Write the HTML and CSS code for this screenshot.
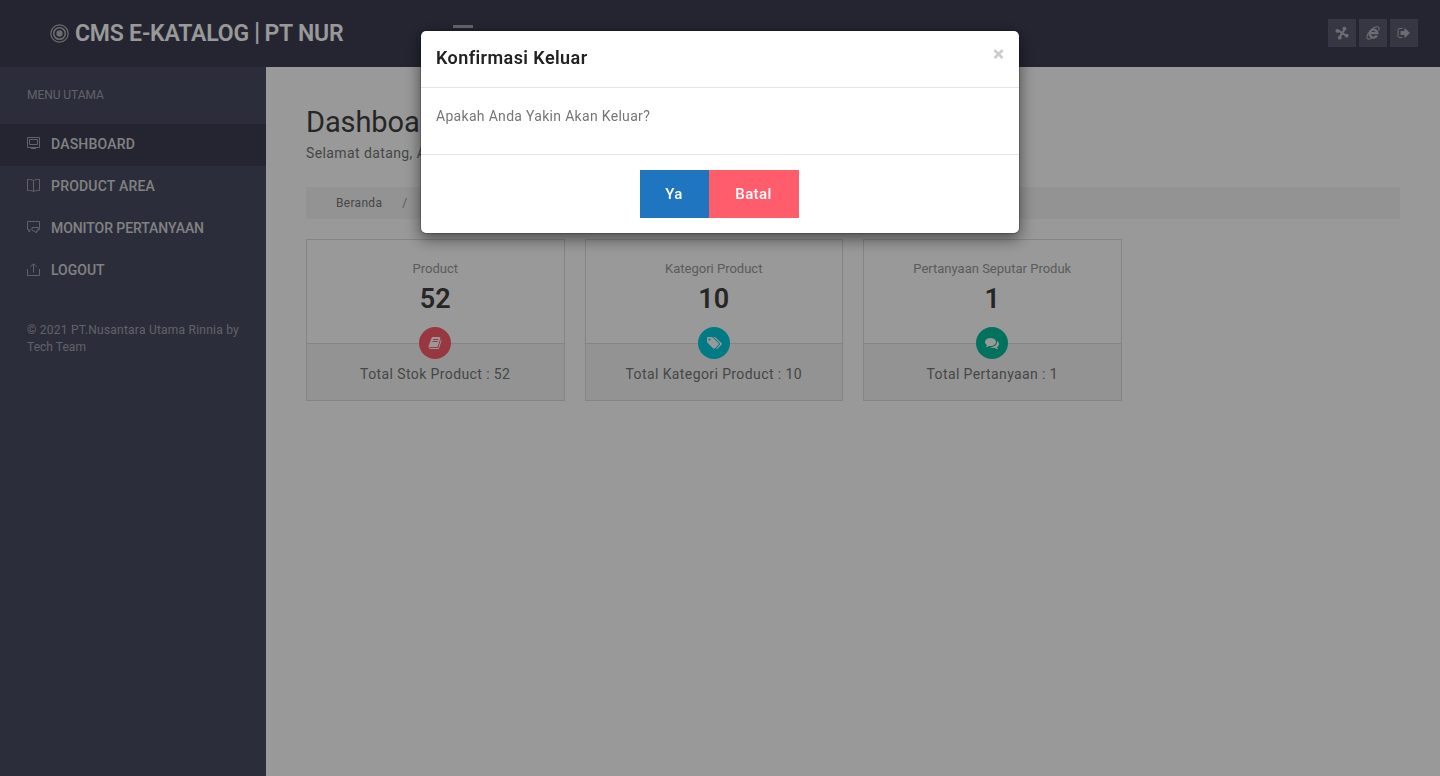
FILE: index.html
```html
<!DOCTYPE html>
<html lang="id">
<head>
<meta charset="utf-8">
<title>CMS E-Katalog</title>
<link rel="stylesheet" href="styles.css">
</head>
<body>
<header class="topbar">
  <div class="brand">
    <svg class="brand-icon" viewBox="0 0 20 20" fill="none" stroke="currentColor"><circle cx="10" cy="10" r="9.1" stroke-width="1.3"/><circle cx="10" cy="10" r="6.1" stroke-width="1.6"/><circle cx="10" cy="10" r="3.3" fill="currentColor" stroke="none"/></svg>
    <span class="brand-text">CMS E-KATALOG<span class="pipe"> | </span>PT NUR</span>
  </div>
  <div class="toggle"></div>
  <div class="tools">
    <span class="tool"><svg viewBox="0 0 16 16" fill="currentColor" stroke="currentColor"><path d="M3 5.600C6 5.500 7.500 8 13 11.200M10.800 3.500C10 7 7 8.500 5.400 13" stroke-width="2.400" fill="none"/><g stroke="none"><circle cx="2.800" cy="5.600" r="2.200"/><circle cx="10.800" cy="3" r="2.200"/><circle cx="13.300" cy="11" r="2.200"/><circle cx="5.400" cy="13.300" r="2.200"/></g></svg></span>
    <span class="tool"><svg viewBox="0 0 16 16" fill="none" stroke="currentColor"><path d="M4.400 8.200H13A4.500 4.500 0 1 0 12.500 10.800" stroke-width="2.700"/><path d="M6 4.200C9 1.300 13.500-.3 14.700 1.600c.5.900.2 2.300-.4 3.600M3 7.500C.8 11 .4 14.300 2.200 14.900 3.700 15.200 5.600 14.400 7 13.300" stroke-width="1.200"/></svg></span>
    <span class="tool"><svg class="exit" viewBox="0 0 1792 1792" fill="currentColor"><path d="M704 1440q0 4 1 20t.5 26.500-3 23.500-10 19.500-20.500 6.500h-320q-119 0-203.500-84.500t-84.500-203.500v-704q0-119 84.500-203.500t203.500-84.500h320q13 0 22.500 9.500t9.500 22.500q0 4 1 20t.5 26.500-3 23.500-10 19.500-20.500 6.500h-320q-66 0-113 47t-47 113v704q0 66 47 113t113 47h312l11.500 1 11.500 3 8 5.500 7 9 2 13.500zm928-544q0 26-19 45l-544 544q-19 19-45 19t-45-19-19-45v-288h-448q-26 0-45-19t-19-45v-384q0-26 19-45t45-19h448v-288q0-26 19-45t45-19 45 19l544 544q19 19 19 45z"/></svg></span>
  </div>
</header>
<div class="layout">
  <nav class="sidebar">
    <div class="menu-title">MENU UTAMA</div>
    <a class="item active"><svg viewBox="0 0 13 13" fill="none" stroke="currentColor"><path d="M.5 .5h12v10H.5zM2.500 2.500h8v5h-8zM4 11.500h5"/></svg><span class="wide-text">DASHBOARD</span></a>
    <a class="item"><svg viewBox="0 0 13 13" fill="none" stroke="currentColor"><path d="M6.500 1.500C5 .5 3 .5.5.5v11c2.500 0 4.500 0 6 1 1.500-1 3.500-1 6-1V.5c-2.500 0-4.500 0-6 1zM6.500 1.500v11"/></svg><span class="wide-text">PRODUCT AREA</span></a>
    <a class="item"><svg viewBox="0 0 13 13" fill="none" stroke="currentColor"><path d="M3.500 8.500 2 11V8.500H.5v-8h12v8H11M5 6.500h6v3.500H9.500v2L7.500 10H6L5 8.500z"/></svg><span class="tight-text">MONITOR PERTANYAAN</span></a>
    <a class="item"><svg viewBox="0 0 13 13" fill="none" stroke="currentColor"><path d="M.5 6v6.500h12V6M6.500 9.500V.8M3.500 3.800l3-3 3 3"/></svg><span>LOGOUT</span></a>
    <p class="copy">© 2021 PT.Nusantara Utama Rinnia by<br><span class="team">Tech Team</span></p>
  </nav>
  <main class="content">
    <h1 class="title">Dashboard</h1>
    <p class="welcome">Selamat datang, Admin</p>
    <div class="crumbs"><span>Beranda</span><span class="sep">/</span><span>Dashboard</span></div>
    <div class="cards">
      <section class="card">
        <div class="card-main"><div class="label">Product</div><div class="value">52</div></div>
        <div class="card-foot"><span class="badge red"><svg viewBox="0 0 1792 1792" fill="currentColor"><path d="M1703 478q40 57 18 129l-275 906q-19 64-76.500 107.500t-122.500 43.500h-923q-77 0-148.500-53.500t-99.500-131.500q-24-67-2-127 0-4 3-27t4-37q1-8-3-21.500t-3-19.500q2-11 8-21t16.500-23.500 16.500-23.500q23-38 45-91.500t30-91.500q3-10 .5-30t-.5-28q3-11 17-28t17-23q21-36 42-92t25-90q1-9-2.500-32t.5-28q4-13 22-30.500t22-22.500q19-26 42.500-84.500t27.500-96.500q1-8-3-25.500t-2-26.500q2-8 9-18t18-23 17-21q8-12 16.500-30.500t15-35 16-36 19.500-32 26.500-23.500 36-11.500 47.500 5.500l-1 3q38-9 51-9h761q74 0 114 56t18 130l-274 906q-36 119-71.500 153.500t-128.500 34.500h-869q-27 0-38 15-11 16-1 43 24 70 144 70h923q29 0 56-15.500t35-41.500l300-987q7-22 5-57 38 15 59 43zm-1064 2q-4 13 2 22.500t20 9.500h608q13 0 25.500-9.500t16.500-22.500l21-64q4-13-2-22.500t-20-9.500h-608q-13 0-25.500 9.500t-16.500 22.500zm-83 256q-4 13 2 22.500t20 9.500h608q13 0 25.500-9.500t16.500-22.500l21-64q4-13-2-22.500t-20-9.500h-608q-13 0-25.500 9.500t-16.500 22.500z"/></svg></span>Total Stok Product : 52</div>
      </section>
      <section class="card">
        <div class="card-main"><div class="label">Kategori Product</div><div class="value">10</div></div>
        <div class="card-foot"><span class="badge cyan"><svg class="wide" viewBox="0 0 2048 1792" fill="currentColor"><path d="M576 448q0-53-37.500-90.500t-90.500-37.500-90.500 37.500-37.500 90.500 37.500 90.500 90.500 37.500 90.500-37.500 37.500-90.500zm1067 576q0 53-37 90l-491 492q-39 37-91 37-53 0-90-37l-715-716q-38-37-64.500-101t-26.500-117v-416q0-52 38-90t90-38h416q53 0 117 26.500t102 64.500l715 714q37 39 37 91zm384 0q0 53-37 90l-491 492q-39 37-91 37-36 0-59-14t-53-45l470-470q37-37 37-90 0-52-37-91l-715-714q-38-38-102-64.500t-117-26.500h224q53 0 117 26.500t102 64.500l715 714q37 39 37 91z"/></svg></span>Total Kategori Product : 10</div>
      </section>
      <section class="card">
        <div class="card-main"><div class="label">Pertanyaan Seputar Produk</div><div class="value">1</div></div>
        <div class="card-foot"><span class="badge green"><svg viewBox="0 0 1792 1792" fill="currentColor"><path d="M1408 768q0 139-94 257t-256.500 186.500-353.500 68.500q-86 0-176-16-124 88-278 128-36 9-86 16h-3q-11 0-20.500-8t-11.500-21q-1-3-1-6.500t.5-6.500 2-6l2.500-5 3.500-5.500 4-5 4.500-5 4-4.500q5-6 23-25t26-29.500 22.500-29 25-38.500 20.500-44q-124-72-195-177t-71-224q0-139 94-257t256.500-186.500 353.500-68.500 353.500 68.500 256.500 186.500 94 257zm384 256q0 120-71 224.500t-195 176.500q10 24 20.500 44t25 38.500 22.500 29 26 29.500 23 25q1 1 4 4.500t4.500 5 4 5 3.500 5.500l2.500 5 2 6 .5 6.500-1 6.500q-3 14-13 22t-22 7q-50-7-86-16-154-40-278-128-90 16-176 16-271 0-472-132 58 4 88 4 161 0 309-45t264-129q125-92 192-212t67-254q0-77-23-152 129 71 204 178t75 230z"/></svg></span>Total Pertanyaan : 1</div>
      </section>
    </div>
  </main>
</div>
<div class="backdrop">
  <div class="modal">
    <div class="modal-head"><h2 class="modal-title">Konfirmasi Keluar</h2><span class="close">×</span></div>
    <div class="modal-body">Apakah Anda Yakin Akan Keluar?</div>
    <div class="modal-foot"><button class="btn blue">Ya</button><button class="btn pink">Batal</button></div>
  </div>
</div>
</body>
</html>
```
FILE: styles.css
```css
* { box-sizing: border-box; }
body { margin: 0; height: 776px; overflow: hidden; font-family: Roboto, sans-serif; font-size: 14px; color: #757575; background: #fff; }
h1, h2, p { margin: 0; }
.topbar { display: flex; align-items: center; height: 67px; padding: 0 22px 0 50px; background: #3c3e53; }
.brand { display: flex; align-items: center; width: 403px; gap: 6px; color: #fff; }
.brand-icon { width: 19px; height: 19px; color: #b5b5ba; }
.brand-text { font-size: 23px; font-weight: 600; line-height: 28px; letter-spacing: -.2px; white-space: pre; }
.pipe { font-size: 25px; font-weight: 500; letter-spacing: -1px; }
.toggle { width: 20px; height: 17px; border-top: 3px solid #aaabb2; }
.tools { display: flex; gap: 3px; margin: 0 0 2px auto; }
.tool { display: flex; align-items: center; justify-content: center; width: 28px; height: 28px; background: #5a5c6e; color: #b5b6be; }
.tool svg { width: 14px; height: 14px; }
.layout { display: flex; height: 709px; }
.sidebar { width: 266px; background: #4a4c62; color: #d8d8da; }
.menu-title { height: 57px; padding: 19px 27px 0; font-size: 12px; line-height: 18px; letter-spacing: -.05px; color: #a2a3ac; }
.item { display: flex; align-items: center; gap: 11px; height: 42px; padding: 0 27px 2px; font-size: 14px; font-weight: 500; }
.item.active { background: #3c3e53; }
.item svg { width: 13px; height: 13px; margin-bottom: 1px; color: #a2a3ac; }
.wide-text { letter-spacing: .2px; }
.tight-text { letter-spacing: -.07px; }
.copy { padding: 30px 20px 0 27px; font-size: 12px; line-height: 17px; letter-spacing: .23px; color: #a2a3ac; }
.team { letter-spacing: .05px; }
.content { flex: 1; padding: 35px 40px 0; }
.title { font-size: 29px; line-height: 40px; font-weight: 400; letter-spacing: -.1px; color: #404040; }
.welcome { margin-top: 1px; line-height: 20px; letter-spacing: .4px; }
.crumbs { display: flex; align-items: center; gap: 20px; height: 32px; margin-top: 24px; padding: 0 30px; background: #f5f5f5; font-size: 12px; letter-spacing: .3px; }
.sep { color: #999; }
.cards { display: grid; grid-template-columns: repeat(4, 258.5px); gap: 20px; margin-top: 20px; }
.card { height: 162px; border: 1px solid #dcdcdc; text-align: center; }
.card-main { height: 104px; padding-top: 19px; border-bottom: 1px solid #dcdcdc; }
.label { font-size: 13px; line-height: 20px; color: #999; }
.value { margin-top: 4px; font-size: 27px; line-height: 32px; font-weight: 600; color: #404040; }
.card-foot { position: relative; height: 56px; padding-top: 20px; background: #f5f5f5; line-height: 20px; letter-spacing: .4px; }
.badge { position: absolute; left: 50%; top: -17px; width: 32px; height: 32px; margin-left: -16px; display: flex; align-items: center; justify-content: center; border-radius: 50%; color: #fff; }
.badge svg { width: 14px; height: 14px; }
.badge .wide { width: 16px; }
.red { background: #ff5c6c; }
.cyan { background: #00cddb; }
.green { background: #00bf9d; }
.backdrop { position: fixed; inset: 0; padding-top: 30px; background: rgba(0,0,0,.4); }
.modal { width: 600px; margin: 0 auto; background: #fff; background-clip: padding-box; border: 1px solid rgba(0,0,0,.2); border-radius: 6px; box-shadow: 0 5px 15px rgba(0,0,0,.5); }
.modal-head { display: flex; justify-content: space-between; height: 57px; padding: 15px; border-bottom: 1px solid #e5e5e5; }
.modal-title { font-size: 18px; line-height: 24px; font-weight: 600; letter-spacing: .42px; color: #212121; }
.close { font-size: 21px; line-height: 16px; font-weight: 900; color: #ccc; }
.modal-body { height: 66px; padding: 18px 15px; line-height: 20px; letter-spacing: .31px; }
.modal-foot { display: flex; justify-content: center; height: 79px; padding: 15px 17px 15px 15px; border-top: 1px solid #e5e5e5; }
.btn { height: 48px; padding: 0; border: 0; color: #fff; font: 500 15px/20px Roboto, sans-serif; letter-spacing: .4px; }
.blue { width: 69px; background: #1f75bf; }
.pink { width: 90px; background: #ff5c6c; }
```
